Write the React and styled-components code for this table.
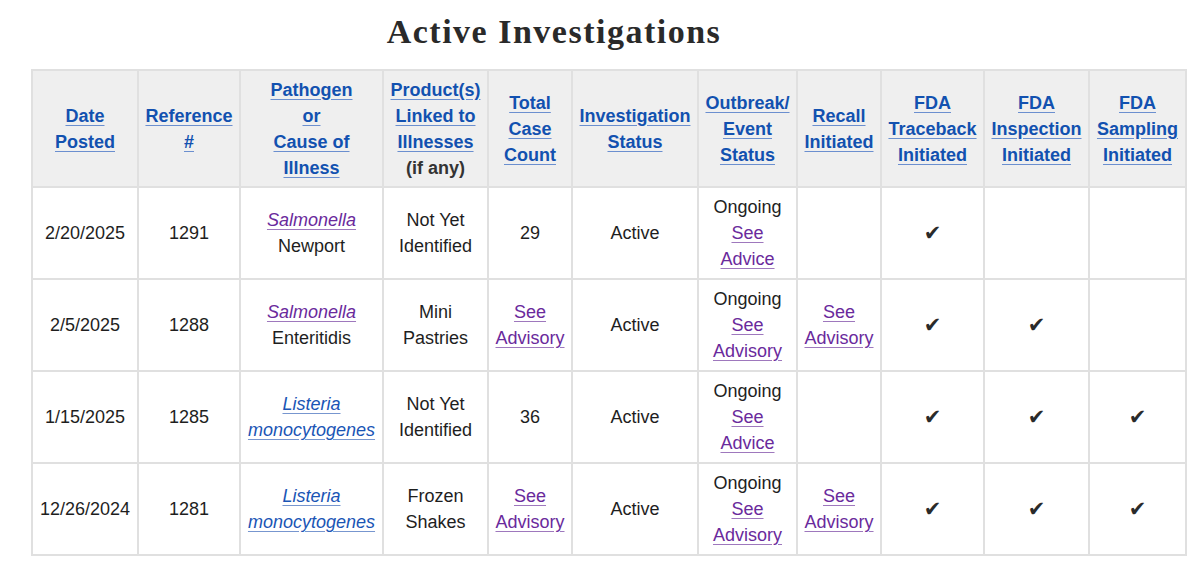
import React from 'react';
import styled, { createGlobalStyle } from 'styled-components';

const GlobalStyle = createGlobalStyle`
  html, body {
    margin: 0;
    padding: 0;
    background: #ffffff;
  }
  body {
    font-family: 'Liberation Sans', Arial, sans-serif;
    color: #1b1b1b;
  }
`;

const Page = styled.div`
  width: 1200px;
  height: 578px;
  padding: 0 15px 0 31px;
  box-sizing: border-box;
  overflow: hidden;
`;

const Title = styled.h2`
  margin: 0;
  padding: 10px 108px 0 0;
  height: 69px;
  box-sizing: border-box;
  text-align: center;
  font-family: 'Liberation Serif', 'Times New Roman', serif;
  font-weight: bold;
  font-size: 34px;
  letter-spacing: 1.5px;
  line-height: 44px;
  color: #2a2a2a;
`;

const Table = styled.table`
  border-collapse: collapse;
  table-layout: fixed;
  width: 1154px;
  font-size: 18px;
  line-height: 26px;
`;

const HeadCell = styled.th`
  background: #efefef;
  border: 2px solid #e0e0e0;
  padding: 5px 4px;
  height: 105px;
  vertical-align: middle;
  text-align: center;
  font-weight: bold;
  color: #333333;
`;

const Cell = styled.td`
  border: 2px solid #e0e0e0;
  padding: 5px 4px;
  height: 80px;
  vertical-align: middle;
  text-align: center;
  color: #1e1e1e;
`;

const HeadLink = styled.a`
  color: #1251b0;
  text-decoration: underline;
  text-decoration-color: #6b8fcf;
  text-underline-offset: 3px;
`;

const Link = styled.a`
  color: ${(p) => (p.$visited ? '#6a2a9c' : '#1a55b5')};
  font-style: ${(p) => (p.$italic ? 'italic' : 'normal')};
  text-decoration: underline;
  text-decoration-color: ${(p) => (p.$visited ? '#9e78bd' : '#7796cf')};
  text-underline-offset: 3px;
`;

const Note = styled.span`
  color: #333333;
`;

const Check = styled.span`
  font-family: 'DejaVu Sans', sans-serif;
  font-size: 21px;
  color: #2a2a2a;
`;

const widths = [106, 102, 143, 105, 84, 126, 99, 84, 103, 105, 97];

const headers = [
  ['Date', 'Posted'],
  ['Reference', '#'],
  ['Pathogen', 'or', 'Cause of', 'Illness'],
  ['Product(s)', 'Linked to', 'Illnesses'],
  ['Total', 'Case', 'Count'],
  ['Investigation', 'Status'],
  ['Outbreak/', 'Event', 'Status'],
  ['Recall', 'Initiated'],
  ['FDA', 'Traceback', 'Initiated'],
  ['FDA', 'Inspection', 'Initiated'],
  ['FDA', 'Sampling', 'Initiated'],
];

const rows = [
  {
    date: '2/20/2025',
    ref: '1291',
    pathogen: ['Salmonella'],
    strain: 'Newport',
    visited: true,
    product: ['Not Yet', 'Identified'],
    count: '29',
    advice: 'Advice',
    recall: false,
    checks: [true, false, false],
  },
  {
    date: '2/5/2025',
    ref: '1288',
    pathogen: ['Salmonella'],
    strain: 'Enteritidis',
    visited: true,
    product: ['Mini', 'Pastries'],
    count: null,
    advice: 'Advisory',
    recall: true,
    checks: [true, true, false],
  },
  {
    date: '1/15/2025',
    ref: '1285',
    pathogen: ['Listeria', 'monocytogenes'],
    strain: null,
    visited: false,
    product: ['Not Yet', 'Identified'],
    count: '36',
    advice: 'Advice',
    recall: false,
    checks: [true, true, true],
  },
  {
    date: '12/26/2024',
    ref: '1281',
    pathogen: ['Listeria', 'monocytogenes'],
    strain: null,
    visited: false,
    product: ['Frozen', 'Shakes'],
    count: null,
    advice: 'Advisory',
    recall: true,
    checks: [true, true, true],
  },
];

const Lines = ({ lines }) =>
  lines.map((line, i) => (
    <React.Fragment key={i}>
      {i > 0 && <br />}
      {line}
    </React.Fragment>
  ));

const SeeAdvisory = () => (
  <Link href="#" $visited>
    See
    <br />
    Advisory
  </Link>
);

export default function App() {
  return (
    <Page>
      <GlobalStyle />
      <Title>Active Investigations</Title>
      <Table>
        <colgroup>
          {widths.map((w, i) => (
            <col key={i} style={{ width: w }} />
          ))}
        </colgroup>
        <thead>
          <tr>
            {headers.map((h, i) => (
              <HeadCell key={i}>
                <HeadLink href="#">
                  <Lines lines={h} />
                </HeadLink>
                {i === 3 && (
                  <>
                    <br />
                    <Note>(if any)</Note>
                  </>
                )}
              </HeadCell>
            ))}
          </tr>
        </thead>
        <tbody>
          {rows.map((r) => (
            <tr key={r.ref}>
              <Cell>{r.date}</Cell>
              <Cell>{r.ref}</Cell>
              <Cell>
                <Link href="#" $italic $visited={r.visited}>
                  <Lines lines={r.pathogen} />
                </Link>
                {r.strain && (
                  <>
                    <br />
                    {r.strain}
                  </>
                )}
              </Cell>
              <Cell>
                <Lines lines={r.product} />
              </Cell>
              <Cell>{r.count ? r.count : <SeeAdvisory />}</Cell>
              <Cell>Active</Cell>
              <Cell>
                Ongoing
                <br />
                <Link href="#" $visited>
                  See
                  <br />
                  {r.advice}
                </Link>
              </Cell>
              <Cell>{r.recall && <SeeAdvisory />}</Cell>
              {r.checks.map((c, i) => (
                <Cell key={i}>{c && <Check>✔</Check>}</Cell>
              ))}
            </tr>
          ))}
        </tbody>
      </Table>
    </Page>
  );
}
